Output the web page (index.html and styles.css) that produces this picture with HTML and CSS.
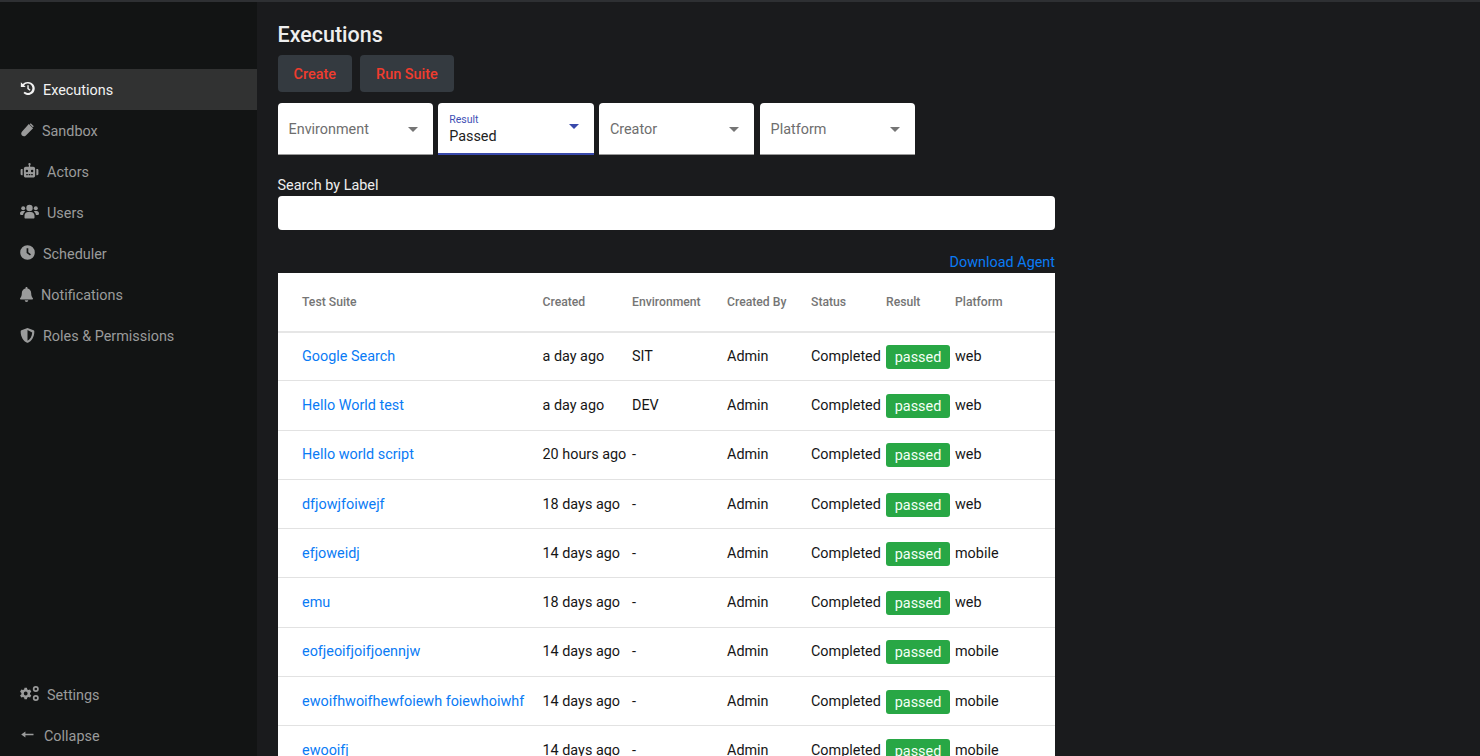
FILE: index.html
```html
<!doctype html>
<html>
<head>
    <meta charset="utf-8">
    <title>Executions</title>
    <link rel="stylesheet" href="styles.css">
</head>
<body>
<div class="app">
    <aside class="sidebar">
        <ul class="nav">
            <li class="nav-item current">
                <svg class="ic w15" viewBox="0 0 16 16"><path d="M8.6 1a7 7 0 1 1-4.9 11.9l1.3-1.4A5 5 0 1 0 4.300 4.600L6 6.300H.9V1.200l2 2A7 7 0 0 1 8.600 1zM7.800 4.400h1.500v3.300l2 1.500-.9 1.200-2.600-2z"/></svg>
                Executions
            </li>
            <li class="nav-item">
                <svg class="ic w14" viewBox="0 0 14 14"><path d="M8.800.9l4.300 4.300-7.200 7.200c-1.100 1.100-2.800 1.200-3.900.1s-1-2.800.1-3.900z"/><path d="M10.700.2l3.100 3.100-1 1L9.700 1.200z"/></svg>
                Sandbox
            </li>
            <li class="nav-item">
                <svg class="ic w19" viewBox="0 0 19 16"><path d="M9.500 0a1.200 1.200 0 0 1 .7 2.200V4h3.300c1.100 0 2 .9 2 2v7.500c0 1.100-.9 2-2 2h-8c-1.100 0-2-.9-2-2V6c0-1.100.9-2 2-2h3.300V2.200A1.200 1.200 0 0 1 9.500 0zM6.700 7.200a1.300 1.300 0 1 0 0 2.600 1.300 1.300 0 0 0 0-2.600zm5.600 0a1.300 1.300 0 1 0 0 2.600 1.300 1.300 0 0 0 0-2.600zM6 11.700v1.300h1.700v-1.300zm2.600 0v1.300h1.800v-1.300zm2.700 0v1.300H13v-1.300zM0 7.500c0-.7.500-1.200 1.200-1.200h1V13h-1C.5 13 0 12.500 0 11.800zm19 0v4.300c0 .7-.5 1.200-1.200 1.200h-1V6.300h1c.7 0 1.200.5 1.200 1.200z"/></svg>
                Actors
            </li>
            <li class="nav-item">
                <svg class="ic w19" viewBox="0 0 19 14"><circle cx="9.500" cy="3.500" r="3.200"/><circle cx="3.200" cy="3.700" r="2"/><circle cx="15.800" cy="3.700" r="2"/><path d="M4.500 13v-1.800C4.500 9 6.200 7.500 8 7.500h3c1.800 0 3.500 1.500 3.500 3.700V13c0 .6-.4 1-1 1h-8c-.6 0-1-.4-1-1zM0 9.300C0 7.500 1 6.500 2.300 6.500h1.500c.5 0 .9.100 1.300.4A5.300 5.300 0 0 0 3 10.500H1c-.6 0-1-.5-1-1.200zm19 0c0 .7-.4 1.200-1 1.200h-2a5.300 5.300 0 0 0-2.100-3.600c.4-.3.8-.4 1.300-.4h1.500C18 6.500 19 7.500 19 9.300z"/></svg>
                Users
            </li>
            <li class="nav-item">
                <svg class="ic w15" viewBox="0 0 15 15"><path fill-rule="evenodd" d="M7.500.2a7.300 7.300 0 1 1 0 14.600A7.300 7.300 0 0 1 7.500.2zM6.600 3.200v4.800l3.400 2.500.9-1.300-2.600-1.900V3.200z"/></svg>
                Scheduler
            </li>
            <li class="nav-item">
                <svg class="ic w13" viewBox="0 0 13 15"><path d="M6.500 0c.6 0 1 .4 1 1v.6c2.300.5 3.700 2.400 3.700 4.700 0 2.900.8 3.800 1.500 4.600.2.200.3.400.3.700 0 .6-.4 1-1 1H1c-.6 0-1-.4-1-1 0-.3.100-.5.300-.7.700-.8 1.500-1.700 1.500-4.600 0-2.300 1.400-4.200 3.700-4.700V1c0-.6.400-1 1-1zM4.700 13.200h3.600a1.800 1.800 0 0 1-3.600 0z"/></svg>
                Notifications
            </li>
            <li class="nav-item">
                <svg class="ic w15" viewBox="0 0 15 16"><path fill-rule="evenodd" d="M7.500 0l6.500 2.500c.5.200.8.600.8 1.100 0 6-3.200 10.300-6.800 12.100-.300.200-.700.200-1 0C3.400 13.900.2 9.600.2 3.600c0-.5.300-.9.800-1.100zm0 2.200v11.400c2.600-1.300 4.900-4.500 5-8.900z"/></svg>
                Roles &amp; Permissions
            </li>
        </ul>
        <ul class="nav nav-bottom">
            <li class="nav-item">
                <svg class="ic w19" viewBox="0 0 19 15"><path fill-rule="evenodd" d="M4.500 1.800h2.400l.4 1.700c.4.100.8.300 1.100.6l1.700-.5 1.200 2.100-1.300 1.200v1.300l1.300 1.200-1.200 2.100-1.700-.5c-.3.300-.7.500-1.100.6l-.4 1.700H4.500l-.4-1.700c-.4-.1-.8-.3-1.100-.6l-1.700.5L.1 9.400l1.300-1.200V6.900L.1 5.700l1.200-2.100 1.700.5c.3-.3.700-.5 1.100-.6zm1.200 3.800a1.900 1.900 0 1 0 0 3.800 1.900 1.900 0 0 0 0-3.800zM15.800 0a3 3 0 1 1 0 6 3 3 0 0 1 0-6zm0 1.700a1.300 1.300 0 1 0 0 2.600 1.300 1.300 0 0 0 0-2.600zM15.800 9a3 3 0 1 1 0 6 3 3 0 0 1 0-6zm0 1.700a1.300 1.300 0 1 0 0 2.600 1.300 1.300 0 0 0 0-2.600z"/></svg>
                Settings
            </li>
            <li class="nav-item">
                <svg class="ic w16" viewBox="0 0 16 11"><path d="M5.400 2.600v2.200H13.500v1.400H5.400v2.200L1.200 5.500z"/></svg>
                Collapse
            </li>
        </ul>
    </aside>
    <main class="content">
        <h1 class="title">Executions</h1>
        <div class="actions">
            <button class="btn">Create</button>
            <button class="btn">Run Suite</button>
        </div>
        <div class="filters">
            <div class="select"><span class="select-text">Environment</span><i class="caret"></i></div>
            <div class="select active">
                <div><span class="select-label">Result</span><span class="select-value">Passed</span></div>
                <i class="caret"></i>
            </div>
            <div class="select"><span class="select-text">Creator</span><i class="caret"></i></div>
            <div class="select"><span class="select-text">Platform</span><i class="caret"></i></div>
        </div>
        <label class="search-label">Search by Label</label>
        <input class="search" type="text">
        <div class="agent"><a href="#">Download Agent</a></div>
        <table class="runs">
            <colgroup>
                <col class="c1"><col class="c2"><col class="c3"><col class="c4"><col class="c5"><col class="c6"><col>
            </colgroup>
            <thead>
                <tr><th>Test Suite</th><th>Created</th><th>Environment</th><th>Created By</th><th>Status</th><th>Result</th><th>Platform</th></tr>
            </thead>
            <tbody>
                <tr><td><a href="#">Google Search</a></td><td>a day ago</td><td>SIT</td><td>Admin</td><td>Completed</td><td><span class="badge">passed</span></td><td>web</td></tr>
                <tr><td><a href="#">Hello World test</a></td><td>a day ago</td><td>DEV</td><td>Admin</td><td>Completed</td><td><span class="badge">passed</span></td><td>web</td></tr>
                <tr><td><a href="#">Hello world script</a></td><td>20 hours ago</td><td>-</td><td>Admin</td><td>Completed</td><td><span class="badge">passed</span></td><td>web</td></tr>
                <tr><td><a href="#">dfjowjfoiwejf</a></td><td>18 days ago</td><td>-</td><td>Admin</td><td>Completed</td><td><span class="badge">passed</span></td><td>web</td></tr>
                <tr><td><a href="#">efjoweidj</a></td><td>14 days ago</td><td>-</td><td>Admin</td><td>Completed</td><td><span class="badge">passed</span></td><td>mobile</td></tr>
                <tr><td><a href="#">emu</a></td><td>18 days ago</td><td>-</td><td>Admin</td><td>Completed</td><td><span class="badge">passed</span></td><td>web</td></tr>
                <tr><td><a href="#">eofjeoifjoifjoennjw</a></td><td>14 days ago</td><td>-</td><td>Admin</td><td>Completed</td><td><span class="badge">passed</span></td><td>mobile</td></tr>
                <tr><td><a href="#">ewoifhwoifhewfoiewh foiewhoiwhf</a></td><td>14 days ago</td><td>-</td><td>Admin</td><td>Completed</td><td><span class="badge">passed</span></td><td>mobile</td></tr>
                <tr><td><a href="#">ewooifj</a></td><td>14 days ago</td><td>-</td><td>Admin</td><td>Completed</td><td><span class="badge">passed</span></td><td>mobile</td></tr>
            </tbody>
        </table>
    </main>
</div>
</body>
</html>
```

FILE: styles.css
```css
* {
    margin: 0;
    padding: 0;
    box-sizing: border-box;
    list-style: none;
}
html, body {
    width: 100%;
    height: 100%;
    overflow: hidden;
}
body {
    background-color: #1a1b1d;
    font-family: Roboto, "Liberation Sans", sans-serif;
    font-size: 14.4px;
}
a {
    color: #0a7bf5;
    text-decoration: none;
}

.app {
    display: flex;
    height: 756px;
    border-top: 2px solid #2e3033;
}

/* sidebar */
.sidebar {
    width: 257px;
    flex: none;
    background-color: #121414;
    padding-top: 67px;
    display: flex;
    flex-direction: column;
    justify-content: space-between;
}
.nav-item {
    height: 41.1px;
    padding: 1px 0 0 20px;
    display: flex;
    align-items: center;
    gap: 8px;
    color: #9a9b9b;
}
.nav-item.current {
    background-color: #313232;
    color: #f2f2f2;
}
.nav-bottom .nav-item {
    padding-top: 2px;
}
.ic {
    fill: currentColor;
    flex: none;
    margin-top: -3px;
}
.nav-bottom .ic {
    margin-top: -4px;
}
.w13 { width: 13px; height: 15px; }
.w14 { width: 14px; height: 14px; }
.w15 { width: 15px; height: 15px; }
.w16 { width: 16px; height: 11px; }
.w19 { width: 19px; height: 15px; }

/* main column */
.content {
    flex: 1;
    padding: 20px 0 0 20.5px;
    min-width: 0;
}
.title {
    font-size: 21.5px;
    font-weight: 500;
    line-height: 26px;
    color: #eeeeee;
}
.actions {
    display: flex;
    gap: 8px;
    margin-top: 7px;
}
.btn {
    height: 37px;
    padding: 2px 16.1px 0;
    border: 0;
    border-radius: 4px;
    background-color: #343a40;
    color: #f03c2e;
    font-family: inherit;
    font-size: 14.4px;
    font-weight: 500;
}
.filters {
    display: flex;
    gap: 5.2px;
    margin-top: 11px;
}
.select {
    width: 155.5px;
    height: 52px;
    padding: 2px 15px 0 11px;
    display: flex;
    align-items: center;
    justify-content: space-between;
    background-color: #fff;
    border-radius: 4px 4px 0 0;
    border-bottom: 1px solid #9a9a9a;
    color: #6e6e6e;
}
.select.active {
    border-bottom: 2px solid #3949ab;
    padding-top: 0;
}
.select-label {
    display: block;
    font-size: 10.5px;
    line-height: 13px;
    color: #3f51b5;
    margin-top: 3px;
}
.select-value {
    display: block;
    line-height: 21px;
    color: #222;
}
.caret {
    width: 0;
    height: 0;
    margin-top: -1px;
    border-left: 5.5px solid transparent;
    border-right: 5.5px solid transparent;
    border-top: 5.5px solid #757575;
}
.active .caret {
    border-top-color: #3949ab;
    margin-top: -3px;
}
.search-label {
    display: block;
    margin-top: 22px;
    line-height: 18px;
    color: #eeeeee;
}
.search {
    display: block;
    width: 777.5px;
    height: 34px;
    margin-top: 1px;
    border: 0;
    border-radius: 4px;
    background-color: #fff;
}
.agent {
    width: 777.5px;
    margin-top: 24px;
    line-height: 18px;
    text-align: right;
}

/* table */
.runs {
    width: 777px;
    table-layout: fixed;
    border-collapse: collapse;
    background-color: #fff;
    color: #161616;
    margin-top: 1px;
}
.c1 { width: 265px; }
.c2 { width: 89.5px; }
.c3 { width: 95px; }
.c4 { width: 84px; }
.c5 { width: 75px; }
.c6 { width: 69px; }
.runs th {
    height: 58.5px;
    text-align: left;
    font-size: 12.2px;
    font-weight: 500;
    color: #757575;
    border-bottom: 2px solid #e6e6e6;
}
.runs td {
    height: 49.3px;
    white-space: nowrap;
    border-bottom: 1px solid #e2e2e2;
}
.runs th:first-child, .runs td:first-child {
    padding-left: 24.5px;
}
.badge {
    display: inline-block;
    width: 64px;
    height: 24px;
    margin-top: 1px;
    line-height: 25px;
    text-align: center;
    border-radius: 3px;
    background-color: #28a745;
    color: #f4fff6;
}
```
